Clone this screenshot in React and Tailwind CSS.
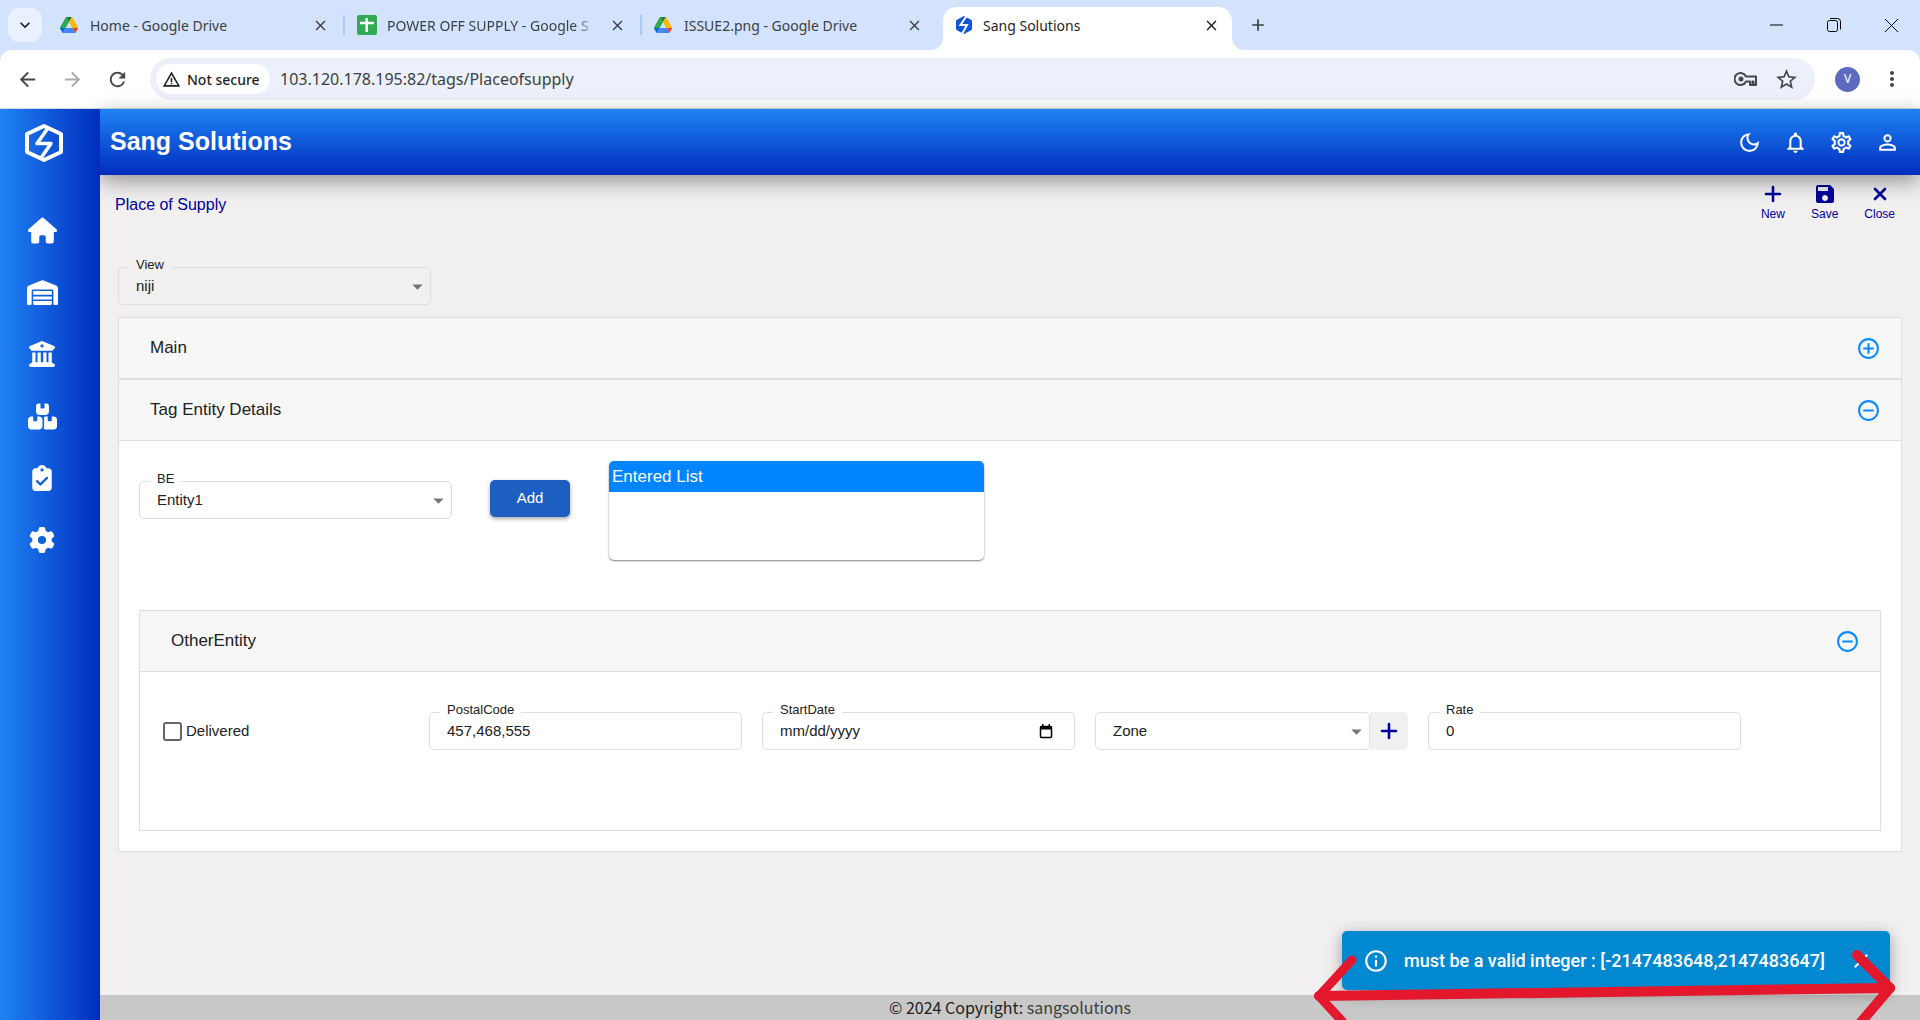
import { useState } from 'react';
import {
  MdAdd,
  MdClose,
  MdSave,
  MdArrowDropDown,
  MdArrowBack,
  MdArrowForward,
  MdRefresh,
  MdStarOutline,
  MdMoreVert,
  MdOutlineNotifications,
  MdOutlineSettings,
  MdPersonOutline,
  MdOutlineDarkMode,
  MdAddCircleOutline,
  MdRemoveCircleOutline,
  MdOutlineInfo,
  MdKeyboardArrowDown,
  MdWarningAmber,
} from 'react-icons/md';
import { FaHouse, FaWarehouse, FaBuildingColumns, FaBoxesStacked, FaClipboardCheck, FaGear } from 'react-icons/fa6';

const tabs = [
  { title: 'Home - Google Drive', icon: 'drive' },
  { title: 'POWER OFF SUPPLY - Google S', icon: 'sheets' },
  { title: 'ISSUE2.png - Google Drive', icon: 'drive' },
];

const menu = [
  { name: 'Home', Icon: FaHouse, size: 29 },
  { name: 'Warehouse', Icon: FaWarehouse, size: 31 },
  { name: 'Bank', Icon: FaBuildingColumns, size: 26 },
  { name: 'Inventory', Icon: FaBoxesStacked, size: 29 },
  { name: 'Tasks', Icon: FaClipboardCheck, size: 26 },
  { name: 'Settings', Icon: FaGear, size: 26 },
];

function DriveIcon() {
  return (
    <svg width="18" height="18" viewBox="0 0 87 78" aria-hidden="true">
      <path d="M6.6 66.9l3.8 6.6c.8 1.4 2 2.5 3.3 3.3L27.5 53H0c0 1.5.4 3.1 1.2 4.5z" fill="#0066da" />
      <path d="M43.6 25L29.9 1.2c-1.3.8-2.5 1.9-3.3 3.3l-25.4 44A9 9 0 0 0 0 53h27.5z" fill="#2da94f" />
      <path d="M73.5 76.8c1.4-.8 2.5-1.9 3.3-3.3l9.3-16c.8-1.4 1.2-3 1.2-4.5H59.8l5.9 11.5z" fill="#ea4335" />
      <path d="M43.6 25L57.4 1.2C56 .4 54.5 0 52.9 0H34.4c-1.6 0-3.2.4-4.5 1.2z" fill="#188038" />
      <path d="M59.8 53H27.5L13.8 76.8c1.3.8 2.9 1.2 4.5 1.2H69c1.6 0 3.1-.4 4.5-1.2z" fill="#4285f4" />
      <path d="M73.4 26.5l-12.7-22c-.8-1.4-2-2.5-3.3-3.3L43.6 25l16.2 28h27.4c0-1.5-.4-3.1-1.2-4.5z" fill="#ffba00" />
    </svg>
  );
}

function SheetsIcon() {
  return (
    <svg width="20" height="20" viewBox="0 0 20 20" aria-hidden="true">
      <rect width="20" height="20" rx="2" fill="#34a853" />
      <path d="M9.7 3v14M3 8h14" stroke="#fff" strokeWidth="2.4" />
    </svg>
  );
}

function KeyIcon() {
  return (
    <svg width="24" height="16" viewBox="0 0 24 16" fill="none" stroke="currentColor" strokeWidth="2" aria-hidden="true">
      <path d="M12 5.500A6 6 0 1 0 12 10.500h4V14h2.500v-3.500h1V14H22V5.500z" strokeLinejoin="round" />
      <circle cx="7" cy="8" r="2.500" fill="currentColor" stroke="none" />
    </svg>
  );
}

function SangFavicon() {
  return (
    <svg width="18" height="18" viewBox="0 0 18 18" aria-hidden="true">
      <path d="M9 .5l7.5 4v9L9 17.500 1.500 13.500v-9z" fill="#0d55d4" stroke="#0d55d4" strokeLinejoin="round" />
      <path d="M11.500 0L5.500 9h6.500L7 18" fill="none" stroke="#fff" strokeWidth="2" />
    </svg>
  );
}

function SangLogo() {
  return (
    <svg width="40" height="40" viewBox="0 0 40 40" fill="none" stroke="#fff" strokeLinejoin="round" aria-hidden="true">
      <path d="M20 3l17 8v18L20 37 3 29V11z" strokeWidth="4" />
      <path d="M24 5L13 20.500h14L17 35" strokeWidth="3.500" />
    </svg>
  );
}

function PlusIcon() {
  return (
    <svg width="24" height="24" viewBox="0 0 24 24" stroke="currentColor" strokeWidth="2.600" strokeLinecap="round" aria-hidden="true">
      <path d="M12 5v14M5 12h14" />
    </svg>
  );
}

function CrossIcon() {
  return (
    <svg width="24" height="24" viewBox="0 0 24 24" stroke="currentColor" strokeWidth="2.600" strokeLinecap="round" aria-hidden="true">
      <path d="M7 7l10 10M17 7L7 17" />
    </svg>
  );
}

function CalendarIcon() {
  return (
    <svg width="14" height="15" viewBox="0 0 14 15" className="absolute right-[21px]" aria-hidden="true">
      <rect x="1.500" y="2.500" width="11" height="11" rx="1" fill="none" stroke="#000" strokeWidth="1.500" />
      <path d="M1 2h12v3.500H1zM3 0h1.500v2H3zM9.500 0H11v2H9.500z" fill="#000" />
    </svg>
  );
}

function BrowserTab({ title, icon }) {
  return (
    <div className="flex h-full w-[297px] items-center px-[14px]">
      <span className="flex w-[30px] shrink-0">{icon === 'drive' ? <DriveIcon /> : <SheetsIcon />}</span>
      <span
        className={`w-[212px] whitespace-nowrap text-[14px] text-[#3c4043] ${
          icon === 'sheets' ? '[mask-image:linear-gradient(to_right,black_88%,transparent)]' : ''
        }`}
      >
        {title}
      </span>
      <button aria-label="Close tab" className="ml-auto text-[#3c4043]"><MdClose size={17} /></button>
    </div>
  );
}

function BrowserChrome() {
  return (
    <div className="font-['Noto_Sans',sans-serif]">
      <div className="flex h-[50px] items-center bg-[#d3e2fd]">
        <button aria-label="Search tabs" className="ml-2 flex h-[34px] w-[34px] items-center justify-center rounded-[11px] bg-[#e9f0fe] text-[#1f1f1f]">
          <MdKeyboardArrowDown size={20} />
        </button>
        <div className="flex h-full items-center pl-1">
          {tabs.map((tab, i) => (
            <div key={tab.title} className="flex h-full items-center">
              {i > 0 && <span className="-mr-0.5 h-5 w-0.5 bg-[#a8c7fa]" />}
              <BrowserTab {...tab} />
            </div>
          ))}
        </div>
        <div className="relative mt-[7px] ml-1.5 flex h-[43px] w-[289px] items-center rounded-t-[14px] bg-white px-3 pb-[7px]">
          <span className="absolute bottom-0 -left-3 h-3 w-3 bg-[radial-gradient(circle_at_0_0,transparent_12px,white_12px)]" />
          <span className="absolute -right-3 bottom-0 h-3 w-3 bg-[radial-gradient(circle_at_100%_0,transparent_12px,white_12px)]" />
          <span className="flex w-7"><SangFavicon /></span>
          <span className="text-[14px] text-[#1f1f1f]">Sang Solutions</span>
          <button aria-label="Close tab" className="ml-auto text-[#1f1f1f]"><MdClose size={17} /></button>
        </div>
        <button aria-label="New tab" className="ml-4 text-[#3c4043]"><MdAdd size={20} /></button>
        <div className="ml-auto flex items-center gap-[41px] pr-[21px] text-black">
          <button aria-label="Minimize" className="flex"><svg width="16" height="16"><path d="M1 8h13" stroke="currentColor" /></svg></button>
          <button aria-label="Restore" className="flex">
            <svg width="16" height="16" fill="none" stroke="currentColor">
              <rect x="1.500" y="3.500" width="10" height="11" rx="2" />
              <path d="M4 1.500h7.500a3 3 0 0 1 3 3v8" />
            </svg>
          </button>
          <button aria-label="Close window" className="flex"><svg width="16" height="16"><path d="M2 2l13 13M15 2L2 15" stroke="currentColor" /></svg></button>
        </div>
      </div>
      <div className="bg-[#d3e2fd]">
        <div className="flex h-[59px] items-center rounded-t-xl border-b border-[#d5dbe3] bg-white pl-4 pr-4 text-[#474747]">
          <button aria-label="Back"><MdArrowBack size={23} /></button>
          <button aria-label="Forward" className="ml-[22px] text-[#a9a9a9]"><MdArrowForward size={23} /></button>
          <button aria-label="Reload" className="ml-[22px]"><MdRefresh size={23} /></button>
          <div className="ml-[21px] flex h-[42px] flex-1 items-center rounded-full bg-[#ebf0fa] pl-1.5 pr-4">
            <span className="flex h-[30px] w-[114px] items-center gap-1.5 rounded-full bg-white pl-1.5 text-[#1f1f1f]">
              <MdWarningAmber size={19} />
              <span className="whitespace-nowrap text-[14px] font-medium">Not secure</span>
            </span>
            <input
              aria-label="Address"
              className="ml-2.5 flex-1 bg-transparent text-[16px] text-[#3c4043] outline-none"
              defaultValue="103.120.178.195:82/tags/Placeofsupply"
            />
            <button aria-label="Passwords"><KeyIcon /></button>
            <button aria-label="Bookmark" className="ml-4"><MdStarOutline size={25} /></button>
          </div>
          <button aria-label="Profile" className="ml-5 h-[25px] w-[25px] rounded-full bg-[#5c6bc0] text-[12px] text-white">V</button>
          <button aria-label="Menu" className="ml-5"><MdMoreVert size={24} /></button>
        </div>
      </div>
    </div>
  );
}

function Field({ label, id, bg = 'bg-white', children }) {
  return (
    <div className={`relative flex h-[38px] w-[313px] items-center rounded-[5px] border border-[#dedede] ${bg}`}>
      <label htmlFor={id} className={`absolute -top-[11px] left-2.5 px-[7px] text-[13px] leading-4 text-[#212121] ${bg}`}>
        {label}
      </label>
      {children}
    </div>
  );
}

function SelectBox({ id, value, label }) {
  return (
    <>
      <select
        id={id}
        aria-label={label}
        className="h-full w-full appearance-none bg-transparent px-[17px] text-[15px] text-[#212121] outline-none"
      >
        <option>{value}</option>
      </select>
      <MdArrowDropDown size={25} className="pointer-events-none absolute right-0 text-[#757575]" />
    </>
  );
}

function PanelHeader({ title, open, onClick }) {
  return (
    <div className="flex h-[60px] items-center justify-between bg-[#f7f7f7] pl-[31px] pr-5">
      <h2 className="text-[17px] text-[#212121]">{title}</h2>
      <button aria-label={`Toggle ${title}`} onClick={onClick} className="text-[#0a8aff]">
        {open ? <MdRemoveCircleOutline size={25} /> : <MdAddCircleOutline size={25} />}
      </button>
    </div>
  );
}

function ToolButton({ icon, label }) {
  return (
    <button className="flex flex-col items-center text-[12px] leading-4 text-[#00009c]">
      <span className="flex h-6 items-center">{icon}</span>
      {label}
    </button>
  );
}

function App() {
  const [mainOpen, setMainOpen] = useState(false);
  const [tagOpen, setTagOpen] = useState(true);
  const [otherOpen, setOtherOpen] = useState(true);

  return (
    <div className="relative flex h-screen flex-col overflow-hidden bg-[#f1eff0] font-['Liberation_Sans',Arial,sans-serif]">
      <BrowserChrome />

      <div className="flex min-h-0 flex-1">
        <nav className="z-20 flex w-[100px] shrink-0 flex-col bg-linear-to-r/srgb from-[#1f83f5] to-[#002dbd] pr-4 text-white">
          <a href="#home" aria-label="Sang Solutions" className="mt-[14px] flex justify-center pl-1"><SangLogo /></a>
          <ul className="mt-9">
            {menu.map(({ name, Icon, size }) => (
              <li key={name}>
                <a href={`#${name}`} aria-label={name} className="flex h-[62px] items-center justify-center">
                  <Icon size={size} />
                </a>
              </li>
            ))}
          </ul>
        </nav>

        <div className="flex min-w-0 flex-1 flex-col">
          <header className="z-10 flex h-[66px] shrink-0 items-center justify-between bg-linear-to-b/srgb from-[#1f83f5] to-[#002dbd] pl-2.5 pr-5 text-white shadow-[0_6px_20px_rgba(0,0,0,0.4)]">
            <h1 className="text-[25px] font-bold">Sang Solutions</h1>
            <div className="flex gap-[21px]">
              <button aria-label="Dark mode"><MdOutlineDarkMode size={25} /></button>
              <button aria-label="Notifications"><MdOutlineNotifications size={25} /></button>
              <button aria-label="Settings"><MdOutlineSettings size={25} /></button>
              <button aria-label="Account"><MdPersonOutline size={25} /></button>
            </div>
          </header>

          <main className="flex-1 px-[18px]">
            <div className="flex justify-between pt-[7px]">
              <p className="mt-[11px] -ml-[3px] text-[16px] text-[#00009c]">Place of Supply</p>
              <div className="mr-[7px] flex gap-[26px]">
                <ToolButton icon={<PlusIcon />} label="New" />
                <ToolButton icon={<MdSave size={24} />} label="Save" />
                <ToolButton icon={<CrossIcon />} label="Close" />
              </div>
            </div>

            <div className="mt-[45px]">
              <Field label="View" id="view" bg="bg-[#f1eff0]"><SelectBox id="view" value="niji" /></Field>
            </div>

            <section className="mt-3 border border-[#dedede] bg-white">
              <PanelHeader title="Main" open={mainOpen} onClick={() => setMainOpen(!mainOpen)} />
              <div className="border-t-2 border-b border-[#dedede]">
                <PanelHeader title="Tag Entity Details" open={tagOpen} onClick={() => setTagOpen(!tagOpen)} />
              </div>
              {tagOpen && (
                <div className="p-5">
                  <div className="flex items-start">
                    <div className="mt-5"><Field label="BE" id="be"><SelectBox id="be" value="Entity1" /></Field></div>
                    <button className="mt-[19px] ml-[38px] h-[37px] w-20 rounded-[5px] bg-[#1d5fc0] text-[15px] text-white shadow-[0_2px_4px_rgba(0,0,0,0.35)]">
                      Add
                    </button>
                    <div className="ml-[39px] h-[99px] w-[375px] overflow-hidden rounded-[5px] shadow-[0_1px_2px_rgba(0,0,0,0.5)]">
                      <h3 className="h-[31px] bg-[#0084ff] pl-[3px] text-[17px] leading-[31px] text-white">Entered List</h3>
                    </div>
                  </div>

                  <section className="mt-[50px] border border-[#dedede]">
                    <PanelHeader title="OtherEntity" open={otherOpen} onClick={() => setOtherOpen(!otherOpen)} />
                    {otherOpen && (
                      <div className="flex h-[159px] gap-5 border-t border-[#dedede] pt-10 pl-[23px]">
                        <label className="flex h-[38px] w-[246px] items-center gap-1 text-[15px] text-[#212121]">
                          <input type="checkbox" className="h-[19px] w-[19px] appearance-none rounded-[3px] border-2 border-[#666]" />
                          Delivered
                        </label>
                        <Field label="PostalCode" id="postal">
                          <input id="postal" defaultValue="457,468,555" className="w-full px-[17px] text-[15px] text-[#212121] outline-none" />
                        </Field>
                        <Field label="StartDate" id="start">
                          <input id="start" placeholder="mm/dd/yyyy" className="w-full px-[17px] text-[15px] outline-none placeholder:text-[#212121]" />
                          <CalendarIcon />
                        </Field>
                        <div className="flex h-[38px] w-[313px]">
                          <div className="relative flex flex-1 items-center rounded-[5px] border border-[#dedede]">
                            <SelectBox id="zone" value="Zone" label="Zone" />
                          </div>
                          <button aria-label="Add zone" className="flex w-[38px] items-center justify-center rounded-r-[5px] bg-[#f0f0f0] text-[#00009c]">
                            <PlusIcon />
                          </button>
                        </div>
                        <Field label="Rate" id="rate">
                          <input id="rate" defaultValue="0" className="w-full px-[17px] text-[15px] text-[#212121] outline-none" />
                        </Field>
                      </div>
                    )}
                  </section>
                </div>
              )}
            </section>
          </main>

          <footer className="h-[25px] shrink-0 bg-[#c8c8c8] text-center font-['Noto_Sans_CJK_SC',sans-serif] text-[16px] leading-[25px] text-[#212121]">
            © 2024 Copyright: <a href="#sangsolutions" className="text-[#3c3c3c]">sangsolutions</a>
          </footer>
        </div>
      </div>

      <div role="alert" className="absolute right-[30px] bottom-[30px] flex h-[59px] w-[548px] items-center rounded-[5px] bg-[#0288d1] pl-[21px] pr-[17px] font-['Roboto',sans-serif] text-white shadow-[0_4px_16px_rgba(0,0,0,0.35)]">
        <MdOutlineInfo size={26} />
        <span className="ml-[15px] whitespace-nowrap text-[18px] font-medium">must be a valid integer : [-2147483648,2147483647]</span>
        <button aria-label="Dismiss" className="ml-auto"><MdClose size={24} /></button>
      </div>

      {/* hand-drawn double arrow under the alert */}
      <svg className="pointer-events-none absolute right-0 bottom-0" width="620" height="80" viewBox="0 0 620 80" fill="none" stroke="#e4182d" strokeLinecap="round" strokeLinejoin="round" aria-hidden="true">
        <path d="M19 56L590 48" strokeWidth="10" />
        <path d="M52 20L19 56L52 92" strokeWidth="9" />
        <path d="M557 15L590 48L556 88" strokeWidth="10" />
      </svg>
    </div>
  );
}

export default App;
